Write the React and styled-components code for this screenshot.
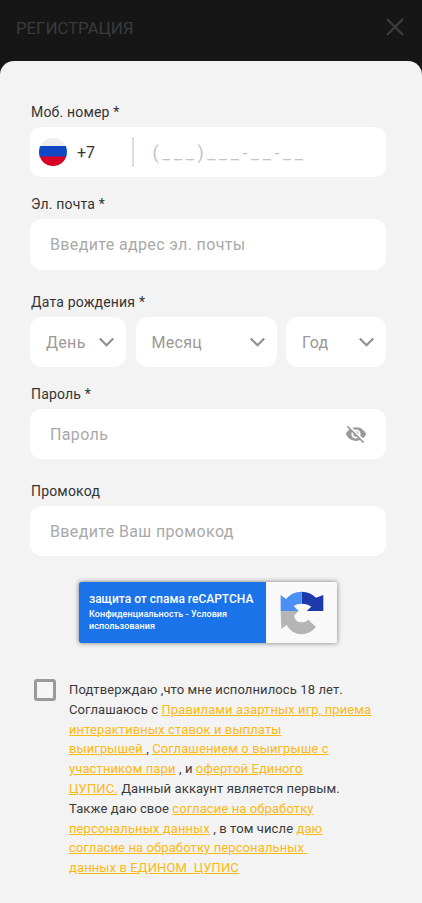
import styled, { createGlobalStyle } from "styled-components";
import { MdVisibilityOff } from "react-icons/md";

const GlobalStyle = createGlobalStyle`
  html, body {
    margin: 0;
    padding: 0;
    background: #161616;
    font-family: Roboto, "Liberation Sans", sans-serif;
  }
  * { box-sizing: border-box; }
`;

const Page = styled.div`
  width: 422px;
  height: 903px;
  overflow: hidden;
  display: flex;
  flex-direction: column;
`;

const Header = styled.header`
  height: 61px;
  flex: none;
  display: flex;
  align-items: center;
  justify-content: space-between;
  padding: 0 18px 0 16px;
`;

const Title = styled.h1`
  margin: 0 0 6px;
  font-size: 17px;
  font-weight: 400;
  letter-spacing: -0.15px;
  color: #3b3b3b;
`;

const Close = styled.svg`
  width: 18px;
  height: 18px;
  margin-bottom: 8px;
  stroke: #3f3f3f;
  stroke-width: 2;
  fill: none;
`;

const Sheet = styled.main`
  flex: 1;
  background: #f3f3f3;
  border-radius: 14px 14px 0 0;
  padding: 41px 36px 0 30px;
`;

const Field = styled.div`
  margin-top: ${(p) => p.$top || 0}px;
`;

const Label = styled.div`
  height: 20px;
  margin: 0 0 5px 1px;
  font-size: 14px;
  line-height: 20px;
  letter-spacing: 0.18px;
  color: #333;
`;

const Box = styled.div`
  height: ${(p) => p.$h || 50}px;
  background: #fff;
  border-radius: 12px;
  display: flex;
  align-items: center;
  justify-content: space-between;
  padding: 0 20px;
`;

const Hint = styled.span`
  font-size: 16px;
  letter-spacing: 0.36px;
  color: #a9a9a9;
`;

const PhoneBox = styled(Box)`
  justify-content: flex-start;
  padding: 0 0 0 9px;
`;

const Flag = styled.svg`
  width: 28px;
  height: 28px;
  flex: none;
`;

const Code = styled.span`
  width: 65px;
  padding-left: 10px;
  font-size: 16px;
  color: #333;
`;

const Divider = styled.span`
  width: 1.5px;
  height: 30px;
  background: #ddd;
`;

const Mask = styled.span`
  margin-left: 19px;
  font-size: 18px;
  letter-spacing: 3.6px;
  color: #c4c4c4;
`;

const DateRow = styled.div`
  display: flex;
  justify-content: space-between;
`;

const Select = styled(Box)`
  width: ${(p) => p.$w}px;
  flex: none;
  padding: 0 12px 0 16px;
`;

const SelectText = styled.span`
  font-size: 16px;
  letter-spacing: 0.3px;
  color: #999;
`;

const Chevron = styled.svg`
  width: 15px;
  height: 10px;
  fill: none;
  stroke: #8f8f8f;
  stroke-width: 2.2;
`;

const Eye = styled(MdVisibilityOff)`
  font-size: 22px;
  color: #999;
  margin-right: -1px;
`;

const Captcha = styled.div`
  width: 258px;
  height: 61px;
  margin: 26px 0 0 49px;
  display: flex;
  border-radius: 2px;
  background: #f9f9f9;
  box-shadow: 0 0 5px rgba(0, 0, 0, 0.5);
  overflow: hidden;
`;

const CaptchaText = styled.div`
  width: 187px;
  background: #1a73e8;
  color: #fff;
  padding: 10px 0 0 10px;
`;

const CaptchaTitle = styled.div`
  font-size: 12px;
  font-weight: 500;
  line-height: 15px;
  white-space: nowrap;
`;

const CaptchaSmall = styled.div`
  margin-top: 1px;
  font-size: 9px;
  font-weight: 500;
  line-height: 12px;
  letter-spacing: 0.07px;
`;

const CaptchaLogo = styled.div`
  flex: 1;
  display: flex;
  align-items: center;
  justify-content: center;
`;

const Agree = styled.div`
  display: flex;
  margin: 36px 0 0 4px;
`;

const Check = styled.span`
  width: 22px;
  height: 22px;
  flex: none;
  margin-right: 13px;
  border: 3px solid #9a9a9a;
  border-radius: 3px;
  background: #f5f5f5;
`;

const AgreeText = styled.p`
  margin: 1px 0 0;
  font-size: 13px;
  line-height: 19.8px;
  letter-spacing: 0.11px;
  color: #3a3a3a;
  white-space: nowrap;
`;

const Link = styled.a`
  color: #fdb913;
  text-decoration: underline;
`;

const ChevronIcon = () => (
  <Chevron viewBox="0 0 15 10">
    <path d="M.8 1.5l6.7 6.7 6.7-6.7" />
  </Chevron>
);

export default function App() {
  return (
    <Page>
      <GlobalStyle />
      <Header>
        <Title>РЕГИСТРАЦИЯ</Title>
        <Close viewBox="0 0 18 18">
          <path d="M1 1l16 16M17 1L1 17" />
        </Close>
      </Header>
      <Sheet>
        <Field>
          <Label>Моб. номер *</Label>
          <PhoneBox>
            <Flag viewBox="0 0 28 28">
              <clipPath id="flag-clip">
                <circle cx="14" cy="14" r="14" />
              </clipPath>
              <g clipPath="url(#flag-clip)">
                <rect width="28" height="9" fill="#eeeeee" />
                <rect y="8" width="28" height="11" fill="#0f47c4" />
                <rect y="18.5" width="28" height="10" fill="#d90026" />
              </g>
            </Flag>
            <Code>+7</Code>
            <Divider />
            <Mask>(___)___-__-__</Mask>
          </PhoneBox>
        </Field>
        <Field $top={17}>
          <Label>Эл. почта *</Label>
          <Box $h={51}>
            <Hint>Введите адрес эл. почты</Hint>
          </Box>
        </Field>
        <Field $top={22}>
          <Label>Дата рождения *</Label>
          <DateRow>
            <Select $w={96}>
              <SelectText>День</SelectText>
              <ChevronIcon />
            </Select>
            <Select $w={141}>
              <SelectText>Месяц</SelectText>
              <ChevronIcon />
            </Select>
            <Select $w={100}>
              <SelectText>Год</SelectText>
              <ChevronIcon />
            </Select>
          </DateRow>
        </Field>
        <Field $top={17}>
          <Label>Пароль *</Label>
          <Box>
            <Hint>Пароль</Hint>
            <Eye />
          </Box>
        </Field>
        <Field $top={22}>
          <Label>Промокод</Label>
          <Box>
            <Hint>Введите Ваш промокод</Hint>
          </Box>
        </Field>
        <Captcha>
          <CaptchaText>
            <CaptchaTitle>защита от спама reCAPTCHA</CaptchaTitle>
            <CaptchaSmall>
              Конфиденциальность - Условия
              <br />
              использования
            </CaptchaSmall>
          </CaptchaText>
          <CaptchaLogo>
            <svg width="44" height="44" viewBox="30 40 132 132">
              <path fill="#1c3aa9" d="M95 42q26 0 43 18l22-8v48h-50l14-13q-11-9-29-9z" />
              <path fill="#4a90f5" d="M95 42v36q-15 0-24 7l15 15H32V52l16 12q18-22 47-22z" />
              <path fill="#b5b5b5" d="M32 100h54l-14 14q4 20 23 20 12 0 20-8l23 22q-18 22-43 22-29 0-45-28l-16 12z" />
            </svg>
          </CaptchaLogo>
        </Captcha>
        <Agree>
          <Check />
          <AgreeText>
            Подтверждаю ,что мне исполнилось 18 лет.
            <br />
            Соглашаюсь с <Link>Правилами азартных игр, приема</Link>
            <br />
            <Link>интерактивных ставок и выплаты</Link>
            <br />
            <Link>выигрышей </Link>, <Link>Соглашением о выигрыше с</Link>
            <br />
            <Link>участником пари</Link> , и <Link>офертой Единого</Link>
            <br />
            <Link>ЦУПИС.</Link> Данный аккаунт является первым.
            <br />
            Также даю свое <Link>согласие на обработку</Link>
            <br />
            <Link>персональных данных</Link> , в том числе <Link>даю</Link>
            <br />
            <Link>согласие на обработку персональных&nbsp;</Link>
            <br />
            <Link>данных в ЕДИНОМ&nbsp; ЦУПИС</Link>
          </AgreeText>
        </Agree>
      </Sheet>
    </Page>
  );
}
